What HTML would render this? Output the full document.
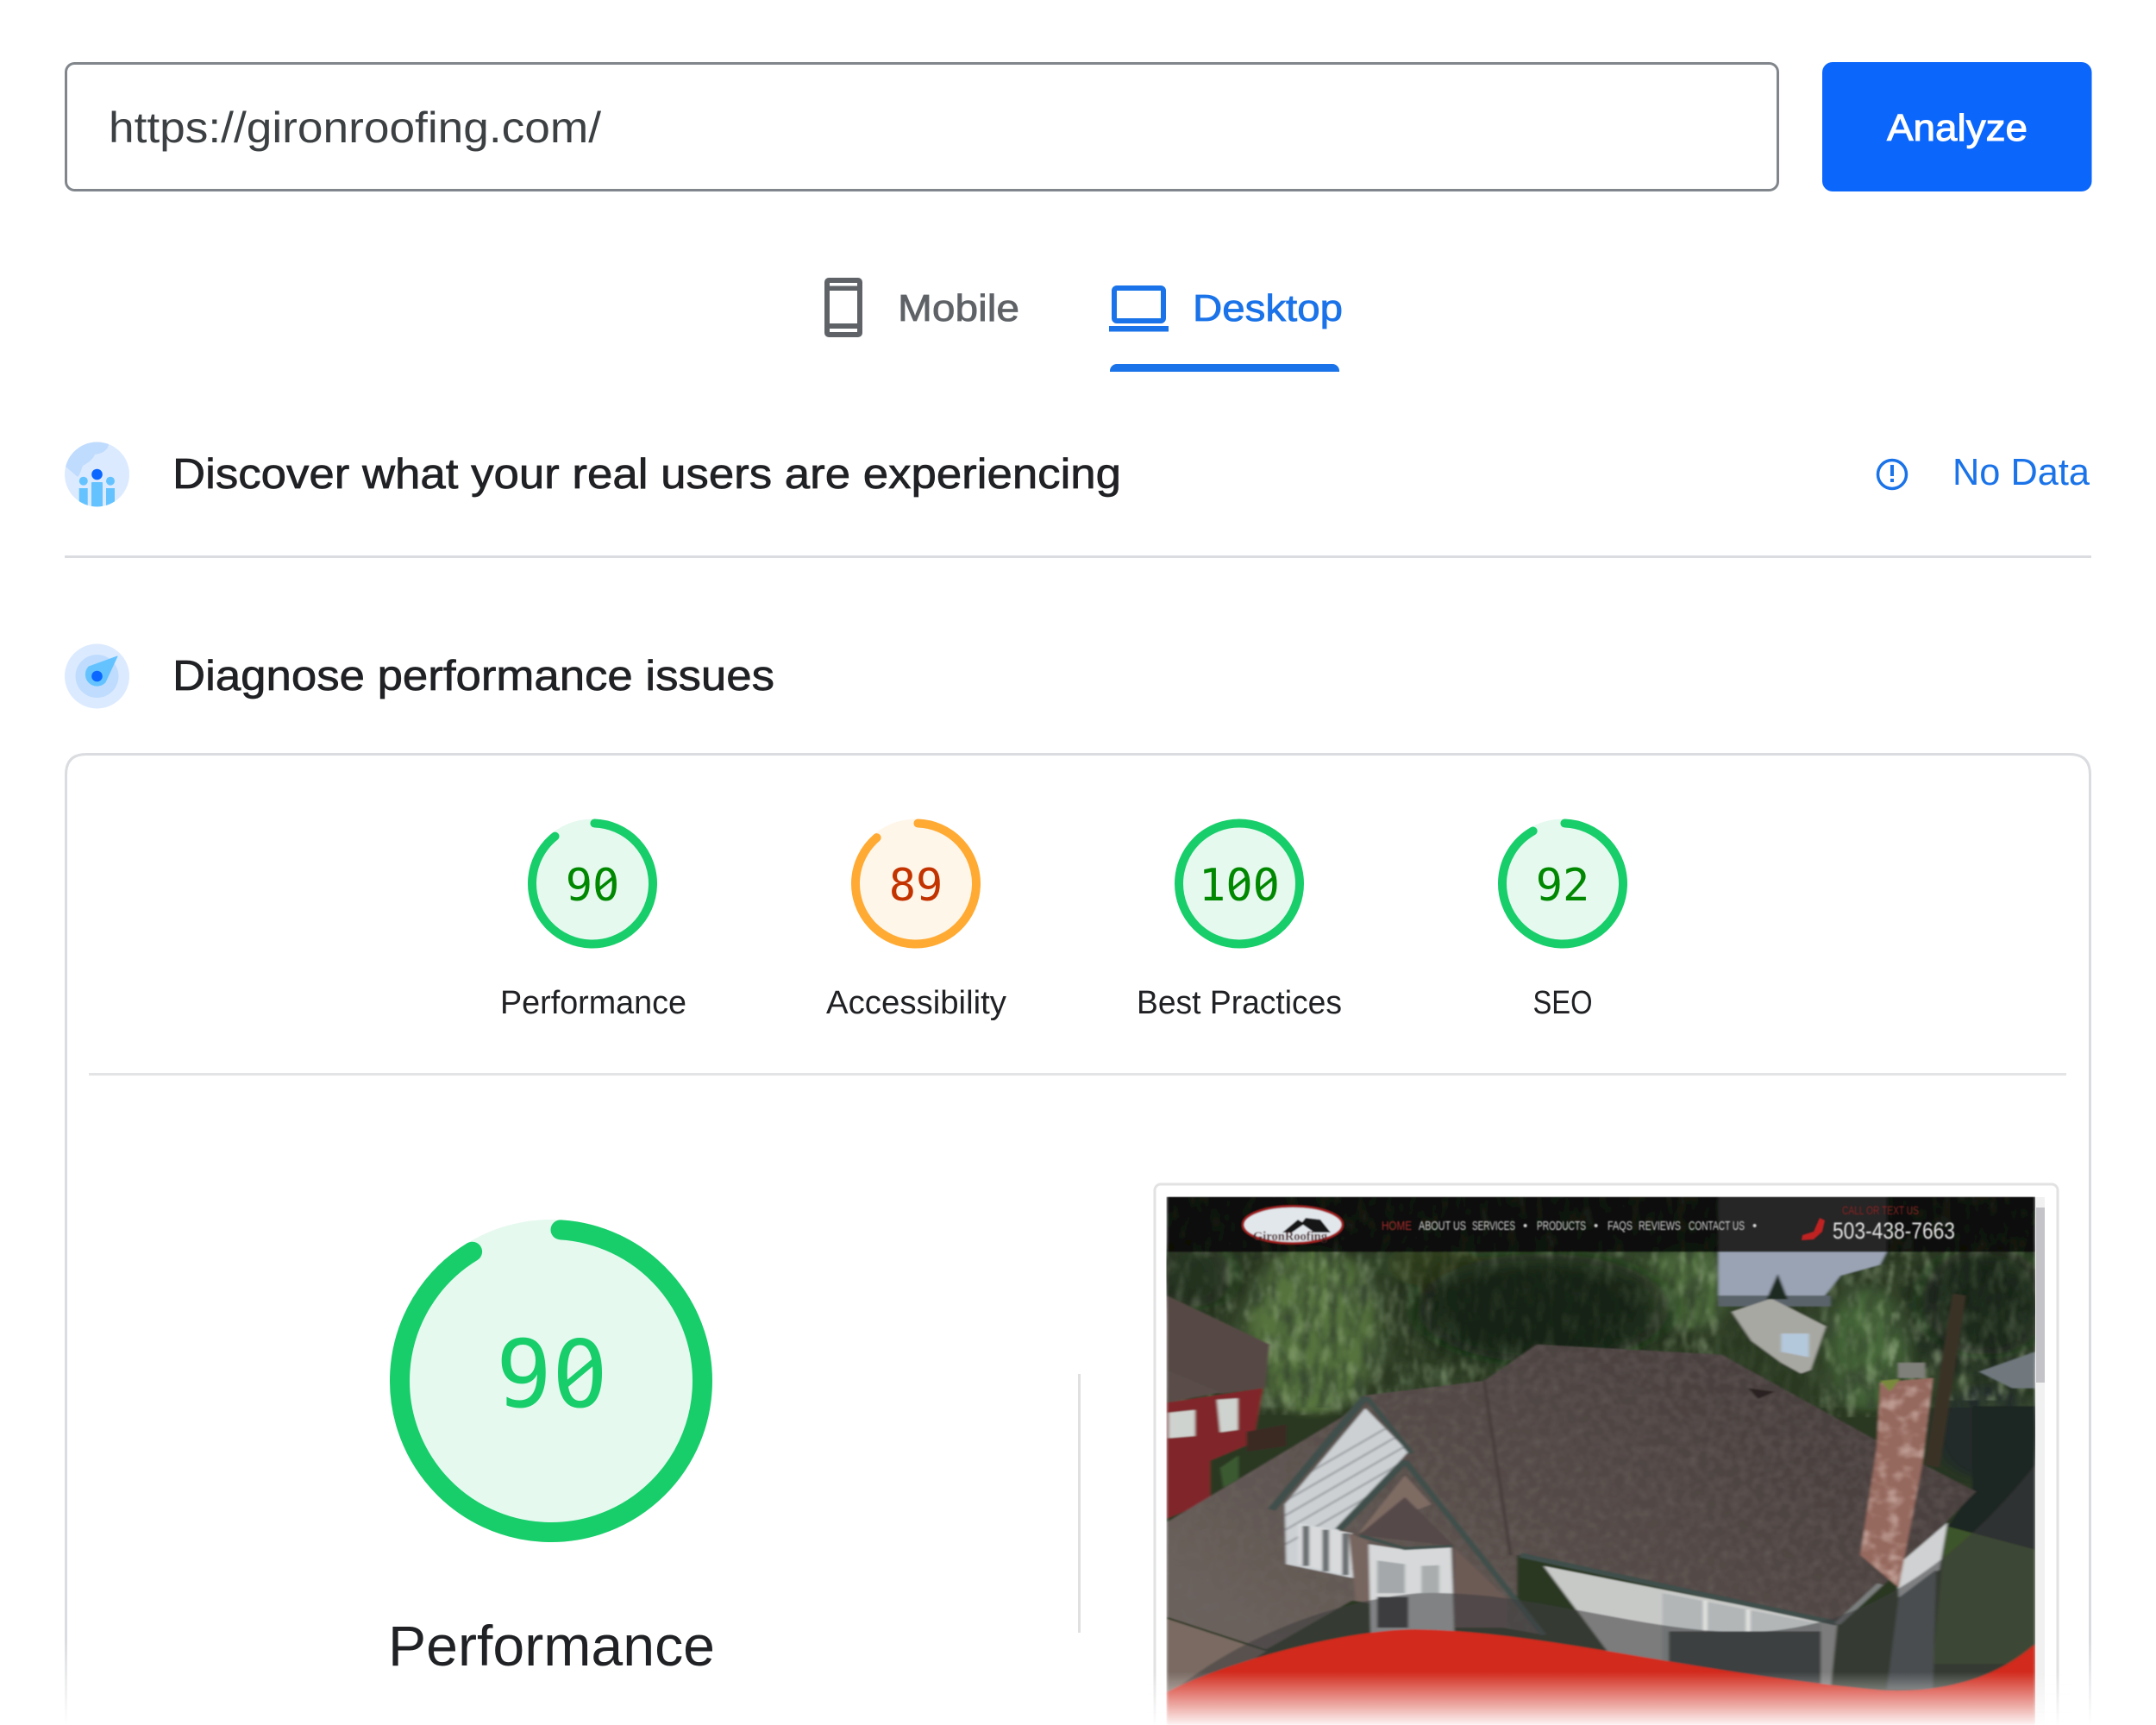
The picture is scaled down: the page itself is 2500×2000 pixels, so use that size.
<!DOCTYPE html>
<html lang="en"><head><meta charset="utf-8"><title>PageSpeed Insights</title>
<style>
html,body{margin:0;padding:0;background:#fff;width:2500px;height:2000px;overflow:hidden}
svg{display:block}
text{font-family:"Liberation Sans",Arial,sans-serif}
.mono{font-family:"DejaVu Sans Mono","Liberation Mono",monospace}
.h{font-size:49px;fill:#202124;stroke:#202124;stroke-width:.7}
.l{font-size:38px;fill:#202124}
</style></head><body>
<svg width="2500" height="2000" viewBox="0 0 2500 2000" xmlns="http://www.w3.org/2000/svg">
<defs>
<linearGradient id="cf" gradientUnits="userSpaceOnUse" x1="0" y1="1900" x2="0" y2="2000"><stop offset="0" stop-color="#dadce0"/><stop offset="1" stop-color="#fff"/></linearGradient>
<linearGradient id="wf" gradientUnits="userSpaceOnUse" x1="0" y1="1938" x2="0" y2="2000"><stop offset="0" stop-color="#fff" stop-opacity="0"/><stop offset="1" stop-color="#fff" stop-opacity=".95"/></linearGradient>
<linearGradient id="rf" gradientUnits="userSpaceOnUse" x1="200" y1="1300" x2="1000" y2="650"><stop offset="0" stop-color="#6b615c"/><stop offset=".55" stop-color="#544a47"/><stop offset="1" stop-color="#4a403f"/></linearGradient>
<clipPath id="ph"><rect x="69" y="113" width="1316" height="1455"/></clipPath>
<clipPath id="c1"><circle cx="112.5" cy="550" r="37.5"/></clipPath>
<clipPath id="roofc"><path d="M630 520L910 548L1140 780L1295 925L1175 1150L1090 1290L600 1100L600 1230L640 1320L350 1225L220 1360L69 1270V1010L335 720L370 660L550 620Z"/></clipPath>
<clipPath id="gab"><path d="M370 695L435 815L330 1030L355 1165L250 1125L248 960Z"/></clipPath>
<clipPath id="chim"><path d="M1150 625L1230 612L1214 850L1178 1190L1120 1100L1145 800Z"/></clipPath>
<filter id="fol" x="0" y="0" width="100%" height="100%"><feTurbulence type="fractalNoise" baseFrequency=".07 .012" numOctaves="3" seed="4"/><feColorMatrix values="0 0 0 0 .04  0 0 0 0 .07  0 0 0 0 .03  2.2 0 0 0 -.75"/></filter>
<filter id="lig" x="0" y="0" width="100%" height="100%"><feTurbulence type="fractalNoise" baseFrequency=".07 .014" numOctaves="3" seed="11"/><feColorMatrix values="0 0 0 0 .42  0 0 0 0 .55  0 0 0 0 .32  2.4 0 0 0 -1.15"/></filter>
<filter id="shg" x="0" y="0" width="100%" height="100%"><feTurbulence type="fractalNoise" baseFrequency=".08 .035" numOctaves="2" seed="7"/><feColorMatrix values="0 0 0 0 .16  0 0 0 0 .14  0 0 0 0 .13  2.2 0 0 0 -.8"/></filter>
<filter id="brk" x="0" y="0" width="100%" height="100%"><feTurbulence type="fractalNoise" baseFrequency=".05 .03" numOctaves="2" seed="3"/><feColorMatrix values="0 0 0 0 .9  0 0 0 0 .75  0 0 0 0 .7  3 0 0 0 -1.4"/></filter>
<filter id="b1" x="-5%" y="-5%" width="110%" height="110%"><feGaussianBlur stdDeviation="2 1.6"/></filter>
<filter id="b2" x="-30%" y="-30%" width="160%" height="160%"><feGaussianBlur stdDeviation="14 10"/></filter>
<filter id="b3" x="-30%" y="-30%" width="160%" height="160%"><feGaussianBlur stdDeviation="30 24"/></filter>
<filter id="bt"><feGaussianBlur stdDeviation=".75"/></filter>
</defs>

<!-- URL bar -->
<rect x="76.5" y="73.5" width="1985" height="147" rx="10" fill="#fff" stroke="#80868b" stroke-width="3"/>
<text x="126" y="165" font-size="50" fill="#3c4043" textLength="571" lengthAdjust="spacingAndGlyphs">https://gironroofing.com/</text>
<rect x="2113" y="72" width="312.5" height="150" rx="12" fill="#0b66fb"/>
<text x="2188" y="163" font-size="44" fill="#fff" stroke="#fff" stroke-width="1" textLength="163" lengthAdjust="spacingAndGlyphs">Analyze</text>

<!-- Tabs -->
<rect x="956" y="322" width="44" height="69" rx="5" fill="#5f6368"/>
<rect x="962" y="328" width="32" height="3.5" fill="#fff"/>
<rect x="962" y="337" width="32" height="38" fill="#fff"/>
<rect x="962" y="381" width="32" height="4" fill="#fff"/>
<text x="1041" y="372" font-size="44" fill="#5f6368" stroke="#5f6368" stroke-width=".8" textLength="141" lengthAdjust="spacingAndGlyphs">Mobile</text>
<rect x="1292" y="334" width="57" height="38" rx="3" fill="#fff" stroke="#1a73e8" stroke-width="6"/>
<rect x="1286" y="378" width="69" height="6.5" fill="#1a73e8"/>
<text x="1383" y="372" font-size="44" fill="#1a73e8" stroke="#1a73e8" stroke-width=".8" textLength="174" lengthAdjust="spacingAndGlyphs">Desktop</text>
<path d="M1287 431V430A8 8 0 0 1 1295 422H1545A8 8 0 0 1 1553 430V431Z" fill="#1a73e8"/>

<!-- Real users section -->
<circle cx="112.5" cy="550" r="37.5" fill="#dceaff"/>
<g clip-path="url(#c1)">
<path d="M75 512H126C127 522 118 526 110 527C107 534 101 537 96 540C94 545 93 550 90 553L75 540Z" fill="#bfdcfe"/>
<rect x="106" y="559" width="13" height="32" rx="1" fill="#64c3ff"/>
<rect x="91.7" y="566" width="10" height="26" fill="#64c3ff"/>
<rect x="123" y="566" width="10" height="26" fill="#64c3ff"/>
</g>
<circle cx="112.5" cy="550" r="6.3" fill="#0b67ff"/>
<circle cx="96.8" cy="557.7" r="5" fill="#64c3ff"/>
<circle cx="128" cy="557.7" r="5" fill="#64c3ff"/>
<text x="200" y="566" class="h" textLength="1100" lengthAdjust="spacingAndGlyphs">Discover what your real users are experiencing</text>
<circle cx="2194" cy="550" r="16.5" fill="none" stroke="#1a73e8" stroke-width="3.5"/>
<rect x="2192" y="539" width="4" height="13" fill="#1a73e8"/>
<rect x="2192" y="555" width="4" height="4" fill="#1a73e8"/>
<text x="2264" y="562" font-size="44" fill="#1a73e8" textLength="159" lengthAdjust="spacingAndGlyphs">No Data</text>
<rect x="75" y="644" width="2350" height="3" fill="#dadce0"/>

<!-- Diagnose section -->
<circle cx="112.5" cy="784" r="37.5" fill="#dceaff"/>
<circle cx="112.5" cy="784" r="25" fill="#bfdcfe"/>
<path d="M136 761L122 791A12.5 12.5 0 1 1 103 773Z" fill="#64c3ff" stroke="#64c3ff" stroke-linejoin="round"/>
<circle cx="112.5" cy="784" r="6.3" fill="#0b67ff"/>
<text x="200" y="800" class="h" textLength="698" lengthAdjust="spacingAndGlyphs">Diagnose performance issues</text>

<!-- Card -->
<path d="M76.5 2000V898Q76.5 874.5 100 874.5H2400Q2423.5 874.5 2423.5 898V2000" fill="none" stroke="url(#cf)" stroke-width="3"/>

<!-- Small gauges -->
<g>
<circle cx="687" cy="1024.5" r="75" fill="#e5f9ef"/>
<circle cx="687" cy="1024.5" r="70" fill="none" stroke="#18ce6a" stroke-width="10" stroke-linecap="round" pathLength="360" stroke-dasharray="320 360" transform="rotate(-88 687 1024.5)"/>
<text x="687" y="1044" class="mono" font-size="52" fill="#008800" text-anchor="middle">90</text>
<circle cx="702.6" cy="1025" r="5" fill="#e5f9ef"/><path d="M692 1033L713 1016" stroke="#008800" stroke-width="3.5"/>
<text x="688" y="1175" class="l" text-anchor="middle" textLength="216" lengthAdjust="spacingAndGlyphs">Performance</text>

<circle cx="1062" cy="1024.5" r="75" fill="#fff6ea"/>
<circle cx="1062" cy="1024.5" r="70" fill="none" stroke="#ffaa33" stroke-width="10" stroke-linecap="round" pathLength="360" stroke-dasharray="318 360" transform="rotate(-88 1062 1024.5)"/>
<text x="1062" y="1044" class="mono" font-size="52" fill="#c33300" text-anchor="middle">89</text>
<text x="1062.5" y="1175" class="l" text-anchor="middle" textLength="209" lengthAdjust="spacingAndGlyphs">Accessibility</text>

<circle cx="1437" cy="1024.5" r="70" fill="#e5f9ef" stroke="#18ce6a" stroke-width="10"/>
<text x="1437" y="1044" class="mono" font-size="52" fill="#008800" text-anchor="middle">100</text>
<circle cx="1437" cy="1025" r="5" fill="#e5f9ef"/><path d="M1426.5 1033L1447.5 1016" stroke="#008800" stroke-width="3.5"/>
<circle cx="1468.3" cy="1025" r="5" fill="#e5f9ef"/><path d="M1458 1033L1479 1016" stroke="#008800" stroke-width="3.5"/>
<text x="1437" y="1175" class="l" text-anchor="middle" textLength="238" lengthAdjust="spacingAndGlyphs">Best Practices</text>

<circle cx="1812" cy="1024.5" r="75" fill="#e5f9ef"/>
<circle cx="1812" cy="1024.5" r="70" fill="none" stroke="#18ce6a" stroke-width="10" stroke-linecap="round" pathLength="360" stroke-dasharray="329 360" transform="rotate(-88 1812 1024.5)"/>
<text x="1812" y="1044" class="mono" font-size="52" fill="#008800" text-anchor="middle">92</text>
<text x="1812" y="1175" class="l" text-anchor="middle" textLength="69" lengthAdjust="spacingAndGlyphs">SEO</text>
</g>
<rect x="103" y="1244" width="2293" height="3" fill="#e3e4e6"/>

<!-- Big gauge -->
<circle cx="639" cy="1601" r="187" fill="#e5f9ef"/>
<circle cx="639" cy="1601" r="175.5" fill="none" stroke="#18ce6a" stroke-width="23" stroke-linecap="round" pathLength="360" stroke-dasharray="325 360" transform="rotate(-86.4 639 1601)"/>
<text x="640" y="1631" class="mono" font-size="108" fill="#18ce6a" text-anchor="middle">90</text>
<circle cx="672.5" cy="1592" r="11" fill="#e5f9ef"/><path d="M651 1610L694 1574" stroke="#18ce6a" stroke-width="7"/>
<text x="639.5" y="1931" font-size="66" fill="#202124" text-anchor="middle" textLength="379" lengthAdjust="spacingAndGlyphs">Performance</text>
<rect x="1250" y="1593" width="3" height="300" fill="#e0e0e0"/>

<!-- Screenshot frame -->
<rect x="1339" y="1373" width="1047" height="640" rx="7" fill="#fff" stroke="#e2e2e2" stroke-width="3"/>
<rect x="2360" y="1388" width="11" height="612" fill="#f1f1f1"/>
<rect x="2361" y="1400" width="10" height="203" fill="#c4c4c8"/>

<g transform="translate(1300 1340) scale(.7653 .4209)">
<g clip-path="url(#ph)"><g filter="url(#b1)">
<rect x="69" y="113" width="1316" height="1455" fill="#2a3822"/>
<!-- foliage masses -->
<g filter="url(#b2)">
<ellipse cx="290" cy="480" rx="100" ry="230" fill="#56733c"/>
<ellipse cx="600" cy="300" rx="240" ry="60" fill="#364c2c"/>
<ellipse cx="860" cy="360" rx="60" ry="120" fill="#4f6e3d"/>
<ellipse cx="1130" cy="530" rx="60" ry="170" fill="#456638"/>
<ellipse cx="1290" cy="450" rx="100" ry="170" fill="#242f20"/>
<ellipse cx="1310" cy="760" rx="80" ry="130" fill="#22292a"/>
<ellipse cx="630" cy="450" rx="170" ry="130" fill="#1f301a"/>
<ellipse cx="120" cy="310" rx="60" ry="60" fill="#34462a"/>
</g>
<rect x="69" y="113" width="1316" height="580" filter="url(#fol)"/>
<rect x="69" y="113" width="836" height="600" filter="url(#lig)" opacity=".5"/>
<rect x="1165" y="113" width="220" height="560" filter="url(#lig)" opacity=".6"/>
<rect x="1060" y="300" width="120" height="420" filter="url(#lig)" opacity=".5"/>
<!-- darkening of the shaded tree zones -->
<g filter="url(#b3)" fill="#121b0e">
<ellipse cx="640" cy="420" rx="190" ry="150" opacity=".72"/>
<ellipse cx="1310" cy="400" rx="95" ry="150" opacity=".6"/>
<ellipse cx="110" cy="330" rx="55" ry="90" opacity=".6"/>
<ellipse cx="470" cy="300" rx="70" ry="60" opacity=".35"/>
</g>
<!-- sky -->
<path d="M905 113H1160V265L1150 300L1090 330L1060 400H905Z" fill="#9aa3b4"/>
<path d="M905 113H1160V265H905Z" fill="#a2a2a4"/>
<rect x="905" y="385" width="170" height="30" fill="#5a636a"/>
<!-- distant house -->
<path d="M925 430L985 393L1068 470L1045 590L1030 600L1000 570L955 510Z" fill="#a8a8a2"/>
<path d="M1000 490H1042V555L1000 540Z" fill="#b4c8dc"/>
<path d="M995 325L1010 395H978Z" fill="#1f2c20"/>
<path d="M1260 380L1280 385L1240 860L1218 850Z" fill="#3a3226"/>
<path d="M1300 595L1385 540V640L1350 640Z" fill="#70787e"/>
<!-- lawn -->
<path d="M1290 690H1385V1090L1250 1030L1290 920Z" fill="#1e2622"/>
<path d="M1250 1020L1385 1085V1400H1230Z" fill="#3c5429"/>
<!-- left house -->
<path d="M69 385L225 520L218 640L150 655L69 590Z" fill="#564a45"/>
<path d="M69 590L150 652L70 680Z" fill="#5a4e4a"/>
<path d="M69 680L215 640L200 790L135 840V950L69 1000Z" fill="#80282a"/>
<path d="M72 708L112 700V772L72 778Z" fill="#cfd3cf"/>
<path d="M145 672L177 668V755L150 762Z" fill="#cfd3cf"/>
<path d="M190 760L250 740L250 800L190 815Z" fill="#3a2c24"/>
<path d="M150 860L178 825V890L155 915Z" fill="#3b5a30"/>
<!-- main roof -->
<path d="M630 520L910 548L1140 780L1295 925L1175 1150L1090 1290L600 1100L600 1230L640 1320L350 1225L220 1360L69 1270V1010L335 720L370 660L550 620Z" fill="url(#rf)"/>
<g clip-path="url(#roofc)"><rect x="69" y="500" width="1240" height="900" filter="url(#shg)" opacity=".42"/></g>
<path d="M550 620L590 1100" stroke="#463c3a" stroke-width="5" fill="none"/>
<path d="M950 640L990 650L965 670Z" fill="#2a2422"/>
<path d="M69 1275L220 1365L130 1470L69 1480Z" fill="#7a6a62"/>
<!-- white gable -->
<path d="M370 695L435 815L330 1030L355 1165L250 1125L248 960Z" fill="#ccd0d3"/>
<g clip-path="url(#gab)" stroke="#a4a8ac" stroke-width="5"><path d="M240 1000L440 790M240 1040L440 830M240 960L440 750M240 1080L440 870M240 920L440 710"/></g>
<path d="M370 665L228 975" stroke="#414f4c" stroke-width="13" fill="none"/>
<path d="M372 665L440 820" stroke="#414f4c" stroke-width="9" fill="none"/>
<path d="M268 1012L350 1040V1160L268 1125Z" fill="#d8dadc"/>
<path d="M280 1020V1130M310 1030V1145M340 1040V1155" stroke="#6a6e70" stroke-width="10"/>
<!-- second gable -->
<path d="M430 880L470 960L360 1040Z" fill="#7e6c64"/>
<path d="M430 940L505 1075L360 1045Z" fill="#564a48"/>
<path d="M430 840L330 1030" stroke="#414f4c" stroke-width="13" fill="none"/>
<path d="M430 840L640 1320" stroke="#414f4c" stroke-width="10" fill="none"/>
<path d="M345 1040L375 1060L378 1230L355 1225Z" fill="#77655e"/>
<path d="M375 1070L430 1085L500 1075L505 1320H378Z" fill="#d6d8d9"/>
<path d="M388 1115L430 1125V1205H388Z" fill="#a4a8aa"/>
<path d="M455 1130L482 1128V1205H455Z" fill="#a9adae"/>
<path d="M505 1080L585 1220V1300L505 1300Z" fill="#6c5a54"/>
<path d="M362 1046L430 1082L502 1075" stroke="#414f4c" stroke-width="8" fill="none"/>
<path d="M388 1215H435V1300H388Z" fill="#3c4244"/>
<!-- white lower wall -->
<path d="M640 1130L1085 1290L1075 1470H780Z" fill="#c7c9c7"/>
<path d="M820 1205L1060 1290V1470H820Z" fill="#b2b6b7"/>
<path d="M885 1225V1470M950 1250V1470" stroke="#dfe0de" stroke-width="7"/>
<path d="M830 1310H1060V1470H830Z" fill="#3c4446"/>
<path d="M605 1100L1085 1288" stroke="#414f4c" stroke-width="13" fill="none"/>
<path d="M1085 1290L1150 1180" stroke="#7a7f7e" stroke-width="10" fill="none"/>
<!-- right wall -->
<path d="M1175 1130L1252 1010L1240 1140L1178 1218Z" fill="#cfd1d2"/>
<path d="M1178 1218L1235 1140L1230 1470H1160Z" fill="#5a6364"/>
<!-- chimney -->
<path d="M1150 625L1230 612L1214 850L1178 1190L1120 1100L1145 800Z" fill="#96695e"/>
<g clip-path="url(#chim)"><rect x="1110" y="600" width="130" height="600" filter="url(#brk)" opacity=".42"/></g>
<path d="M1177 570H1218V612H1177Z" fill="#80807a"/>
<path d="M1150 620L1180 615L1165 650Z" fill="#7a8a3e"/>
<!-- translucent wave -->
<path d="M69 1490C160 1350 300 1230 450 1205C620 1195 780 1310 940 1312C1100 1315 1250 1160 1385 850V1568H69Z" fill="#3c3c3e" opacity=".55"/>
<!-- red wave -->
<path d="M69 1478C150 1400 340 1302 450 1305C640 1310 850 1420 1150 1472C1280 1485 1350 1400 1385 1345V1568H69Z" fill="#d22a1c"/>
<!-- header -->
<rect x="69" y="113" width="1316" height="152" fill="#000" opacity=".76"/>
</g></g></g>

<!-- header contents at real scale -->
<g filter="url(#bt)">
<ellipse cx="1499" cy="1420" rx="58" ry="21.5" fill="#e2e7ec" stroke="#a11f1f" stroke-width="3"/>
<path d="M1487 1429L1505 1414L1510 1417L1514 1412L1531 1414L1543 1429L1524 1429L1511 1420L1498 1429Z" fill="#151515"/>
<text x="1453" y="1438" font-size="15" font-weight="bold" fill="#4a2020" style="font-family:'Liberation Serif',serif" textLength="86" lengthAdjust="spacingAndGlyphs">GironRoofing</text>
<g font-size="15" fill="#d8d8d8">
<text x="1602" y="1426" fill="#a82a2a" textLength="35" lengthAdjust="spacingAndGlyphs">HOME</text>
<text x="1645" y="1426" textLength="55" lengthAdjust="spacingAndGlyphs">ABOUT US</text>
<text x="1707" y="1426" textLength="50" lengthAdjust="spacingAndGlyphs">SERVICES</text>
<text x="1766" y="1426">•</text>
<text x="1782" y="1426" textLength="57" lengthAdjust="spacingAndGlyphs">PRODUCTS</text>
<text x="1848" y="1426">•</text>
<text x="1864" y="1426" textLength="29" lengthAdjust="spacingAndGlyphs">FAQS</text>
<text x="1900" y="1426" textLength="49" lengthAdjust="spacingAndGlyphs">REVIEWS</text>
<text x="1958" y="1426" textLength="65" lengthAdjust="spacingAndGlyphs">CONTACT US</text>
<text x="2032" y="1426">•</text>
</g>
<text x="2136" y="1408" font-size="14" fill="#8a2020" textLength="89" lengthAdjust="spacingAndGlyphs">CALL OR TEXT US</text>
<text x="2125" y="1436" font-size="27" fill="#e4e4e4" textLength="142" lengthAdjust="spacingAndGlyphs">503-438-7663</text>
<path d="M2110 1412L2116 1415L2113 1428L2103 1437L2089 1438L2090 1432L2103 1428Z" fill="#c02020"/>
</g>

<rect x="1330" y="1938" width="1070" height="62" fill="url(#wf)"/>
</svg>
</body></html>
